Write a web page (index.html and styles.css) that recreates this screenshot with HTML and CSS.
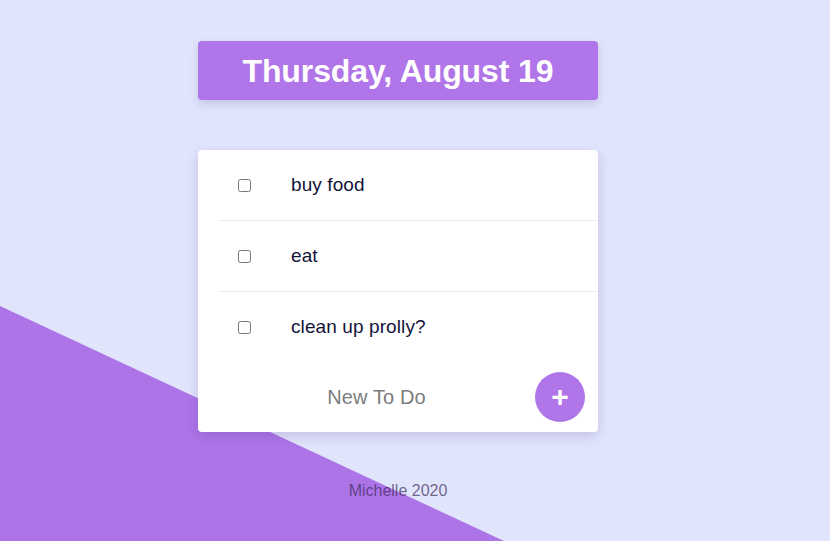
FILE: index.html
```html
<!DOCTYPE html>
<html>
<head>
<meta charset="utf-8">
<link rel="stylesheet" href="styles.css">
</head>
<body>
<div class="wedge"></div>
<main class="page">
  <h1 class="date">Thursday, August 19</h1>
  <section class="card">
    <ul class="list">
      <li class="item"><input type="checkbox" class="check"><span class="label">buy food</span></li>
      <li class="item"><input type="checkbox" class="check"><span class="label">eat</span></li>
      <li class="item"><input type="checkbox" class="check"><span class="label">clean up prolly?</span></li>
    </ul>
    <form class="new">
      <span class="new-text">New To Do</span>
      <button type="button" class="add">+</button>
    </form>
  </section>
  <footer class="foot">Michelle 2020</footer>
</main>
</body>
</html>
```
FILE: styles.css
```css
html, body {
  margin: 0;
  padding: 0;
  height: 100%;
}
body {
  background: #e1e5fc;
  font-family: "Liberation Sans", Arial, sans-serif;
  overflow: hidden;
  position: relative;
}
.wedge {
  position: absolute;
  left: 0;
  top: 0;
  width: 830px;
  height: 541px;
  background: #ad74e7;
  clip-path: polygon(0 306px, 504px 541px, 0 541px);
  z-index: 0;
}
.page {
  position: relative;
  z-index: 1;
  width: 796px;
  display: flex;
  flex-direction: column;
  align-items: center;
  padding-top: 41px;
}
.date {
  margin: 0;
  width: 400px;
  height: 59px;
  box-sizing: border-box;
  background: #b075e8;
  border-radius: 4px;
  color: #fff;
  font-size: 32px;
  font-weight: 700;
  text-align: center;
  line-height: 60px;
  letter-spacing: -0.1px;
  box-shadow: 0 4px 10px rgba(80, 60, 140, 0.2);
}
.card {
  margin-top: 50px;
  width: 400px;
  background: #fff;
  border-radius: 4px;
  box-shadow: 0 4px 12px rgba(80, 60, 140, 0.22);
}
.list {
  list-style: none;
  margin: 0;
  padding: 0 0 0 20px;
}
.item {
  display: flex;
  align-items: center;
  height: 70px;
  border-bottom: 1px solid #ececf2;
}
.item:last-child {
  border-bottom: none;
}
.check {
  margin: 0 0 0 20px;
  width: 13px;
  height: 13px;
}
.label {
  margin-left: 40px;
  font-size: 19px;
  color: #141438;
  letter-spacing: 0.1px;
}
.new {
  display: flex;
  align-items: center;
  height: 70px;
  padding: 0 13px 0 0;
  margin: 0;
}
.new-text {
  flex: 1;
  text-align: center;
  font-size: 20px;
  color: #7b7b7b;
  padding-left: 20px;
  letter-spacing: 0.1px;
}
.add {
  width: 50px;
  height: 50px;
  border: none;
  border-radius: 50%;
  background: #b075e8;
  color: #fff;
  font-family: "Liberation Sans", Arial, sans-serif;
  font-size: 30px;
  font-weight: 700;
  line-height: 50px;
  padding: 0 0 3px;
}
.foot {
  margin-top: 50px;
  font-size: 16px;
  color: rgba(60, 40, 90, 0.7);
}
```
